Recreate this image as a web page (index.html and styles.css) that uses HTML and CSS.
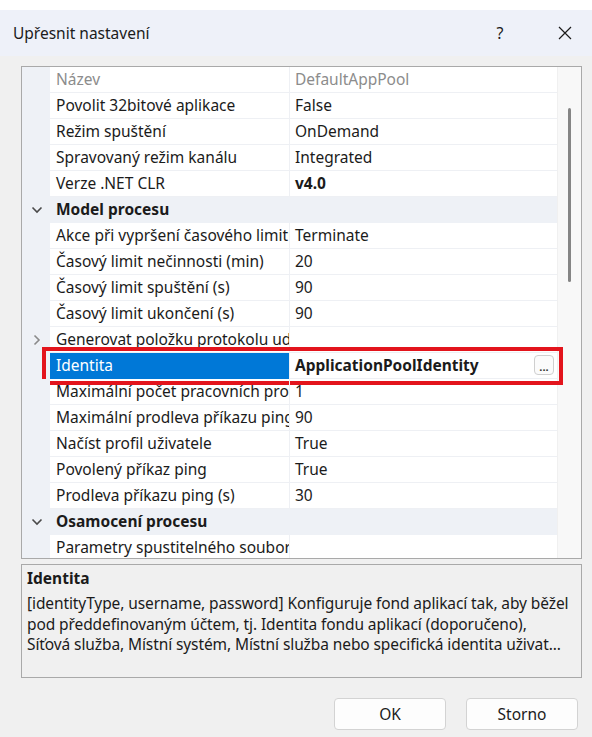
FILE: index.html
```html
<!DOCTYPE html>
<html lang="cs">
<head>
<meta charset="utf-8">
<title>Upřesnit nastavení</title>
<link rel="stylesheet" href="styles.css">
</head>
<body>
<div class="dialog">
  <div class="titlebar">
    <span class="title">Upřesnit nastavení</span>
    <span class="help">?</span>
    <span class="close">
      <svg width="14" height="14" viewBox="0 0 14 14"><path d="M1 1 L13 13 M13 1 L1 13" stroke="#1b1b1b" stroke-width="1.2" fill="none"/></svg>
    </span>
  </div>

  <div class="body">
    <div class="grid">
      <div class="rows">
        <div class="row"><div class="gutter"></div><div class="name dim">Název</div><div class="sep"></div><div class="value dim">DefaultAppPool</div></div>
        <div class="row"><div class="gutter"></div><div class="name">Povolit 32bitové aplikace</div><div class="sep"></div><div class="value">False</div></div>
        <div class="row"><div class="gutter"></div><div class="name">Režim spuštění</div><div class="sep"></div><div class="value">OnDemand</div></div>
        <div class="row"><div class="gutter"></div><div class="name">Spravovaný režim kanálu</div><div class="sep"></div><div class="value">Integrated</div></div>
        <div class="row"><div class="gutter"></div><div class="name">Verze .NET CLR</div><div class="sep"></div><div class="value bold">v4.0</div></div>
        <div class="row category">
          <div class="gutter"><svg class="chev" width="12" height="8" viewBox="0 0 12 8"><path d="M1.5 1.5 L6 6 L10.5 1.5" stroke="#4a4a4a" stroke-width="1.6" fill="none"/></svg></div>
          <div class="cat-label">Model procesu</div>
        </div>
        <div class="row"><div class="gutter"></div><div class="name">Akce při vypršení časového limitu</div><div class="sep"></div><div class="value">Terminate</div></div>
        <div class="row"><div class="gutter"></div><div class="name">Časový limit nečinnosti (min)</div><div class="sep"></div><div class="value">20</div></div>
        <div class="row"><div class="gutter"></div><div class="name">Časový limit spuštění (s)</div><div class="sep"></div><div class="value">90</div></div>
        <div class="row"><div class="gutter"></div><div class="name">Časový limit ukončení (s)</div><div class="sep"></div><div class="value">90</div></div>
        <div class="row">
          <div class="gutter"><svg class="chev" width="8" height="12" viewBox="0 0 8 12"><path d="M1.5 1.5 L6 6 L1.5 10.5" stroke="#8a8a8a" stroke-width="1.6" fill="none"/></svg></div>
          <div class="name">Generovat položku protokolu událostí</div><div class="sep"></div><div class="value"></div>
        </div>
        <div class="row selected">
          <div class="gutter"></div><div class="name">Identita</div><div class="sep"></div>
          <div class="value bold">ApplicationPoolIdentity<span class="ellipsis">...</span></div>
          <div class="highlight"></div>
        </div>
        <div class="row"><div class="gutter"></div><div class="name">Maximální počet pracovních procesů</div><div class="sep"></div><div class="value">1</div></div>
        <div class="row"><div class="gutter"></div><div class="name">Maximální prodleva příkazu ping</div><div class="sep"></div><div class="value">90</div></div>
        <div class="row"><div class="gutter"></div><div class="name">Načíst profil uživatele</div><div class="sep"></div><div class="value">True</div></div>
        <div class="row"><div class="gutter"></div><div class="name">Povolený příkaz ping</div><div class="sep"></div><div class="value">True</div></div>
        <div class="row"><div class="gutter"></div><div class="name">Prodleva příkazu ping (s)</div><div class="sep"></div><div class="value">30</div></div>
        <div class="row category">
          <div class="gutter"><svg class="chev" width="12" height="8" viewBox="0 0 12 8"><path d="M1.5 1.5 L6 6 L10.5 1.5" stroke="#4a4a4a" stroke-width="1.6" fill="none"/></svg></div>
          <div class="cat-label">Osamocení procesu</div>
        </div>
        <div class="row"><div class="gutter"></div><div class="name">Parametry spustitelného souboru</div><div class="sep"></div><div class="value"></div></div>
      </div>
      <div class="scrollbar"><div class="thumb"></div></div>
    </div>

    <div class="description">
      <div class="desc-title">Identita</div>
      <div class="desc-text">
        <span class="desc-line">[identityType, username, password] Konfiguruje fond aplikací tak, aby běžel</span>
        <span class="desc-line">pod předdefinovaným účtem, tj. Identita fondu aplikací (doporučeno),</span>
        <span class="desc-line">Síťová služba, Místní systém, Místní služba nebo specifická identita uživat...</span>
      </div>
    </div>

    <div class="buttons">
      <button class="btn">OK</button>
      <button class="btn">Storno</button>
    </div>
  </div>
</div>
</body>
</html>
```

FILE: styles.css
```css
* { box-sizing: border-box; }

html, body {
  margin: 0;
  padding: 0;
}

body {
  width: 592px;
  height: 737px;
  background: #ffffff;
  font-family: "Noto Sans", "Open Sans", sans-serif;
  font-size: 15.5px;
  color: #1b1b1b;
  overflow: hidden;
}

.dialog {
  margin-top: 10px;
  height: 727px;
  background: #f0f0f0;
  display: flex;
  flex-direction: column;
}

/* window caption */
.titlebar {
  height: 46px;
  background: #eef1f9;
  display: flex;
  align-items: center;
  padding-left: 13px;
}

.title {
  font-size: 15.5px;
  flex: 1;
}

.help {
  width: 20px;
  margin-right: 48px;
  font-size: 16px;
  text-align: center;
}

.close {
  width: 14px;
  margin-right: 20px;
  display: flex;
}

.body {
  padding: 10px 10px 0 21px;
  display: flex;
  flex-direction: column;
}

/* property grid */
.grid {
  width: 561px;
  height: 493px;
  border: 1px solid #a9a9a9;
  background: #ffffff;
  display: flex;
  overflow: hidden;
}

.rows {
  width: 535px;
  display: flex;
  flex-direction: column;
}

.row {
  position: relative;
  flex: 0 0 26px;
  display: grid;
  grid-template-columns: 28px 239px 1px 267px;
  height: 26px;
  line-height: 25px;
}

.gutter {
  background: #eef1f6;
  display: flex;
  align-items: center;
  justify-content: center;
  padding-left: 2px;
}

.name, .value {
  border-bottom: 1px solid #eef0f4;
  white-space: nowrap;
  overflow: hidden;
}

.name {
  padding-left: 6px;
}

.value {
  padding-left: 5px;
  position: relative;
}

.sep {
  background: #eef0f4;
}

.dim {
  color: #8c8c8c;
}

.bold {
  font-weight: 700;
}

.category {
  grid-template-columns: 28px 1fr;
  background: #eef1f6;
}

.cat-label {
  font-weight: 700;
  padding-left: 6px;
}

.selected .name {
  background: #0078d7;
  color: #ffffff;
  border-bottom-color: #0078d7;
}

.ellipsis {
  position: absolute;
  right: 3px;
  top: 2px;
  width: 20px;
  height: 20px;
  border: 1px solid #cfcfcf;
  border-radius: 4px;
  background: #fbfbfb;
  font-size: 11px;
  font-weight: 700;
  line-height: 22px;
  text-align: center;
  color: #333;
}

/* red callout frame around the selected row */
.highlight {
  position: absolute;
  left: 20px;
  top: -6px;
  width: 521px;
  height: 38px;
  border: 4px solid #e3141c;
  pointer-events: none;
}

.scrollbar {
  width: 24px;
  background: #f8f8f8;
  border-left: 1px solid #f0f0f0;
  padding-top: 41px;
  display: flex;
  justify-content: center;
}

.thumb {
  width: 3px;
  height: 174px;
  border-radius: 2px;
  background: #858585;
}

/* description pane */
.description {
  margin-top: 5px;
  width: 561px;
  height: 114px;
  border: 1px solid #a9a9a9;
  padding: 2px 2px 0 5px;
  overflow: hidden;
}

.desc-title {
  font-weight: 700;
  line-height: 22px;
}

.desc-text {
  line-height: 20.5px;
  margin-top: 4px;
  display: flex;
  flex-direction: column;
}

.desc-line {
  white-space: nowrap;
  letter-spacing: -0.1px;
}

.buttons {
  display: flex;
  justify-content: flex-end;
  gap: 20px;
  margin-top: 20px;
  padding-right: 4px;
}

.btn {
  width: 112px;
  height: 32px;
  background: #fdfdfd;
  border: 1px solid #d3d3d3;
  border-radius: 4px;
  font-family: inherit;
  font-size: 15.5px;
  color: #1b1b1b;
}
```
